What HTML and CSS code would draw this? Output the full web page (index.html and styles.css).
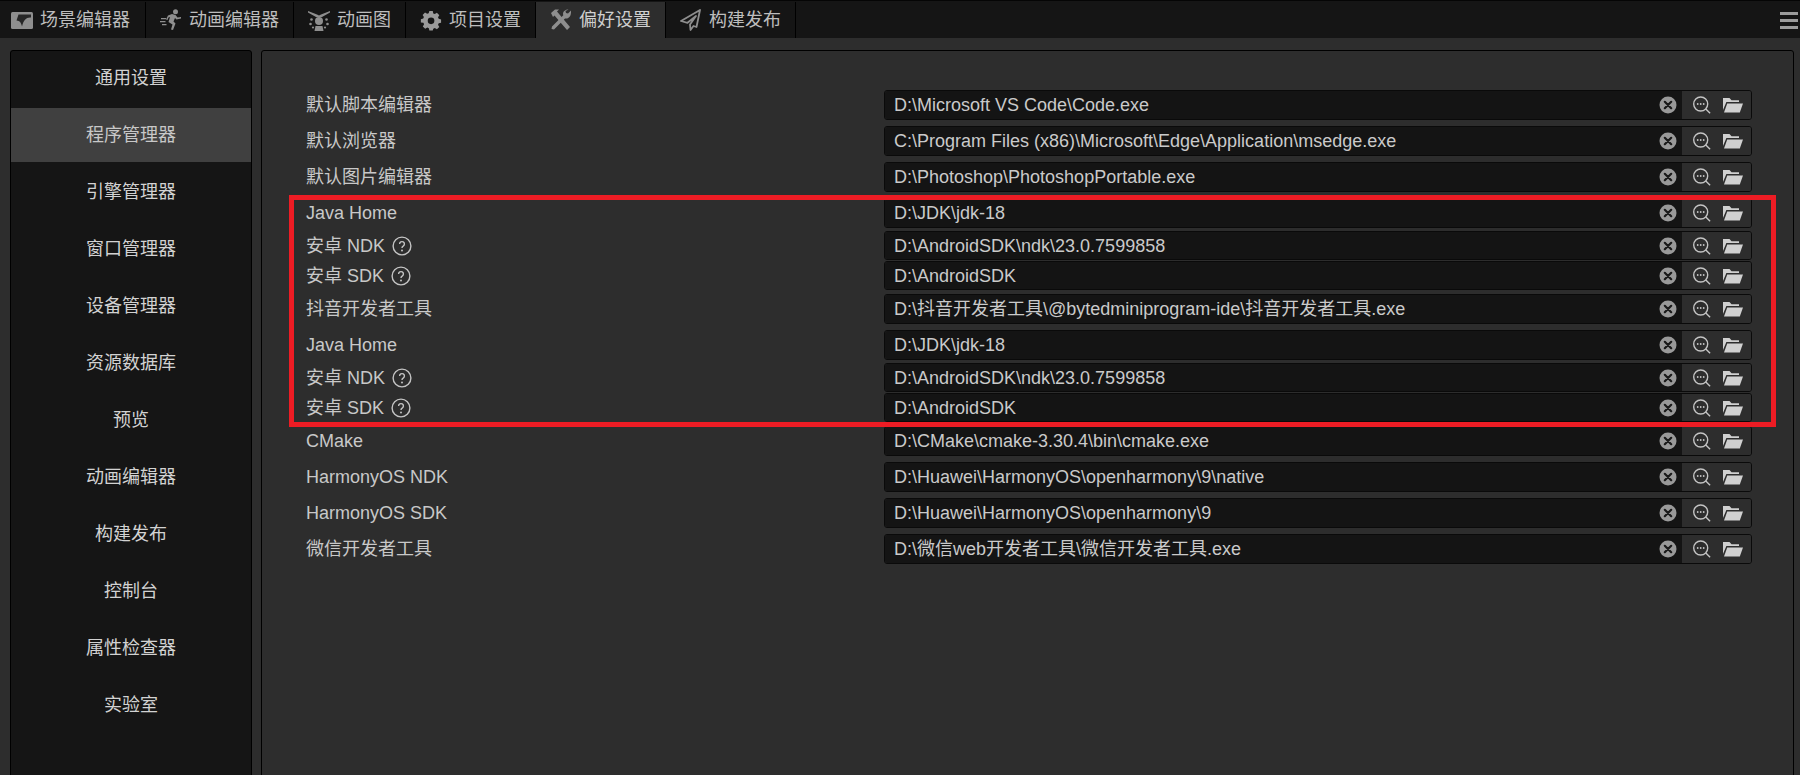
FILE: index.html
```html
<!DOCTYPE html>
<html lang="zh">
<head>
<meta charset="utf-8">
<title>偏好设置</title>
<link rel="stylesheet" href="styles.css">
</head>
<body>
<svg class="defs" width="0" height="0" aria-hidden="true">
  <symbol id="i-clear" viewBox="0 0 18 18">
    <circle cx="9" cy="9" r="8.5" fill="#999"/>
    <path d="M5.8 5.8l6.4 6.4M12.2 5.8l-6.4 6.4" stroke="#1a1a1a" stroke-width="2.2" stroke-linecap="round" fill="none"/>
  </symbol>
  <symbol id="i-search" viewBox="0 0 18 18">
    <circle cx="7.7" cy="8" r="7" fill="none" stroke="#c4c4c4" stroke-width="1.4"/>
    <path d="M12.8 13l4.300 4.300" stroke="#c4c4c4" stroke-width="1.4" fill="none"/>
    <circle cx="4.700" cy="8" r=".9" fill="#c4c4c4"/><circle cx="7.700" cy="8" r=".9" fill="#c4c4c4"/><circle cx="10.700" cy="8" r=".9" fill="#c4c4c4"/>
  </symbol>
  <symbol id="i-folder" viewBox="0 0 20 16">
    <path d="M0 15.500V1h6.500l2 2.200h7.500V5H3.400L0 13z" fill="#d0d0d0"/>
    <path d="M1 15.500L4.200 6.600H20l-3.200 8.900z" fill="#d0d0d0"/>
  </symbol>
  <symbol id="i-help" viewBox="0 0 20 20">
    <circle cx="10" cy="10" r="8.900" fill="none" stroke="#c4c4c4" stroke-width="1.400"/>
    <path d="M7.600 8a2.400 2.400 0 1 1 3.600 2.100c-.8.500-1.200.9-1.200 1.900" fill="none" stroke="#c4c4c4" stroke-width="1.400"/>
    <circle cx="10" cy="14.400" r="1" fill="#c4c4c4"/>
  </symbol>
</svg>

<header class="tabbar">
  <nav class="tabs">
    <div class="tab tab-first">
      <svg class="tab-icon" viewBox="0 0 22 17"><rect width="22" height="17" rx="1.500" fill="#8e8e8e"/><path d="M7.500 2.500H20V5.500C15.500 5 12.500 8 11 14.500 10.300 11 9 8.800 5.500 8.500z" fill="#262626"/></svg>
      <span>场景编辑器</span>
    </div>
    <div class="tab">
      <svg class="tab-icon" viewBox="0 0 22 22"><g fill="#8e8e8e"><circle cx="15.500" cy="2.800" r="2.500"/><path d="M8 6.500l4-1.500 3.500 1 2 2.500 3.500-.5v1.500l-4.500 1-1.500-1.500-1.500 3.500 2 2-2.500 6.500-2-.5 1.500-5-4-2.500 1.500-5-1.500.5-1 2.500-1.500-.5z"/><path d="M1 9h5v1.200H1zM0 12h5.500v1.200H0zM2 15h4.500v1.200H2z"/></g></svg>
      <span>动画编辑器</span>
    </div>
    <div class="tab">
      <svg class="tab-icon" viewBox="0 0 22 22"><g fill="#8e8e8e"><path d="M0 2l9 3.500 2 1 2-1L22 2v1.500L14 8l-3 .5L8 8 0 3.500z"/><circle cx="11" cy="12" r="4"/><path d="M7.500 17h7l1 5h-9z"/><circle cx="3.500" cy="10.500" r="1.300"/><circle cx="18.500" cy="10.500" r="1.300"/><circle cx="2.500" cy="15" r="1.300"/><circle cx="19.500" cy="15" r="1.300"/><circle cx="5" cy="18.500" r="1.100"/><circle cx="17" cy="18.500" r="1.100"/></g></svg>
      <span>动画图</span>
    </div>
    <div class="tab">
      <svg class="tab-icon" viewBox="0 0 22 22"><path fill="#9a9a9a" fill-rule="evenodd" d="M9 1h4l.6 2.800 1.800.8 2.500-1.500 2.800 2.800-1.500 2.500.8 1.800 2.800.6v4l-2.800.6-.8 1.800 1.500 2.500-2.800 2.800-2.500-1.500-1.800.8L13 24H9l-.6-2.800-1.800-.8-2.500 1.500-2.800-2.800 1.500-2.500-.8-1.800L-1 14.500v-4l2.800-.6.800-1.800-1.500-2.500 2.800-2.800 2.500 1.500 1.800-.8zM11 8.600a3.900 3.900 0 1 0 0 7.800 3.900 3.900 0 0 0 0-7.800z" transform="translate(1.700 1.200) scale(.85)"/></svg>
      <span>项目设置</span>
    </div>
    <div class="tab tab-active">
      <svg class="tab-icon" viewBox="0 0 22 22"><g fill="#8e8e8e"><path d="M1 4l4-3.500h4L7 2.500 20 18l-3 3L4.500 6.500 3 8z"/><path d="M21 1.500l-3 3-2-.5-.5-2 3-1.500C16 .3 13 2 13 5l.3 1.300L2 17.500 1.500 20l2.500.5 11-11C18 10 21.500 8 21 1.500z"/></g></svg>
      <span>偏好设置</span>
    </div>
    <div class="tab">
      <svg class="tab-icon" viewBox="0 0 22 22"><path fill="none" stroke="#8e8e8e" stroke-width="1.800" stroke-linejoin="round" d="M20 1L1 12l6.500 1.800L16 7l-6 8.500.5 5.500 3-4 3 1z"/></svg>
      <span>构建发布</span>
    </div>
  </nav>
  <button class="menu" aria-label="menu"><i></i><i></i><i></i></button>
</header>

<main class="workspace">
  <aside class="sidebar">
    <div class="side-item">通用设置</div>
    <div class="side-item side-active">程序管理器</div>
    <div class="side-item">引擎管理器</div>
    <div class="side-item">窗口管理器</div>
    <div class="side-item">设备管理器</div>
    <div class="side-item">资源数据库</div>
    <div class="side-item">预览</div>
    <div class="side-item">动画编辑器</div>
    <div class="side-item">构建发布</div>
    <div class="side-item">控制台</div>
    <div class="side-item">属性检查器</div>
    <div class="side-item">实验室</div>
  </aside>

  <section class="panel">
    <div class="row"><div class="label">默认脚本编辑器</div><div class="field"><div class="path">D:\Microsoft VS Code\Code.exe<svg class="clear"><use href="#i-clear"/></svg></div><div class="actions"><svg class="search"><use href="#i-search"/></svg><svg class="folder"><use href="#i-folder"/></svg></div></div></div>
    <div class="row"><div class="label">默认浏览器</div><div class="field"><div class="path">C:\Program Files (x86)\Microsoft\Edge\Application\msedge.exe<svg class="clear"><use href="#i-clear"/></svg></div><div class="actions"><svg class="search"><use href="#i-search"/></svg><svg class="folder"><use href="#i-folder"/></svg></div></div></div>
    <div class="row"><div class="label">默认图片编辑器</div><div class="field"><div class="path">D:\Photoshop\PhotoshopPortable.exe<svg class="clear"><use href="#i-clear"/></svg></div><div class="actions"><svg class="search"><use href="#i-search"/></svg><svg class="folder"><use href="#i-folder"/></svg></div></div></div>

    <div class="row row-lead"><div class="label">Java Home</div><div class="field"><div class="path">D:\JDK\jdk-18<svg class="clear"><use href="#i-clear"/></svg></div><div class="actions"><svg class="search"><use href="#i-search"/></svg><svg class="folder"><use href="#i-folder"/></svg></div></div></div>
    <div class="row row-tight"><div class="label">安卓 NDK<svg class="help"><use href="#i-help"/></svg></div><div class="field"><div class="path">D:\AndroidSDK\ndk\23.0.7599858<svg class="clear"><use href="#i-clear"/></svg></div><div class="actions"><svg class="search"><use href="#i-search"/></svg><svg class="folder"><use href="#i-folder"/></svg></div></div></div>
    <div class="row row-tight row-end"><div class="label">安卓 SDK<svg class="help"><use href="#i-help"/></svg></div><div class="field"><div class="path">D:\AndroidSDK<svg class="clear"><use href="#i-clear"/></svg></div><div class="actions"><svg class="search"><use href="#i-search"/></svg><svg class="folder"><use href="#i-folder"/></svg></div></div></div>
    <div class="row"><div class="label">抖音开发者工具</div><div class="field"><div class="path">D:\抖音开发者工具\@bytedminiprogram-ide\抖音开发者工具.exe<svg class="clear"><use href="#i-clear"/></svg></div><div class="actions"><svg class="search"><use href="#i-search"/></svg><svg class="folder"><use href="#i-folder"/></svg></div></div></div>
    <div class="row row-lead"><div class="label">Java Home</div><div class="field"><div class="path">D:\JDK\jdk-18<svg class="clear"><use href="#i-clear"/></svg></div><div class="actions"><svg class="search"><use href="#i-search"/></svg><svg class="folder"><use href="#i-folder"/></svg></div></div></div>
    <div class="row row-tight"><div class="label">安卓 NDK<svg class="help"><use href="#i-help"/></svg></div><div class="field"><div class="path">D:\AndroidSDK\ndk\23.0.7599858<svg class="clear"><use href="#i-clear"/></svg></div><div class="actions"><svg class="search"><use href="#i-search"/></svg><svg class="folder"><use href="#i-folder"/></svg></div></div></div>
    <div class="row row-tight row-end"><div class="label">安卓 SDK<svg class="help"><use href="#i-help"/></svg></div><div class="field"><div class="path">D:\AndroidSDK<svg class="clear"><use href="#i-clear"/></svg></div><div class="actions"><svg class="search"><use href="#i-search"/></svg><svg class="folder"><use href="#i-folder"/></svg></div></div></div>

    <div class="row"><div class="label">CMake</div><div class="field"><div class="path">D:\CMake\cmake-3.30.4\bin\cmake.exe<svg class="clear"><use href="#i-clear"/></svg></div><div class="actions"><svg class="search"><use href="#i-search"/></svg><svg class="folder"><use href="#i-folder"/></svg></div></div></div>
    <div class="row"><div class="label">HarmonyOS NDK</div><div class="field"><div class="path">D:\Huawei\HarmonyOS\openharmony\9\native<svg class="clear"><use href="#i-clear"/></svg></div><div class="actions"><svg class="search"><use href="#i-search"/></svg><svg class="folder"><use href="#i-folder"/></svg></div></div></div>
    <div class="row"><div class="label">HarmonyOS SDK</div><div class="field"><div class="path">D:\Huawei\HarmonyOS\openharmony\9<svg class="clear"><use href="#i-clear"/></svg></div><div class="actions"><svg class="search"><use href="#i-search"/></svg><svg class="folder"><use href="#i-folder"/></svg></div></div></div>
    <div class="row"><div class="label">微信开发者工具</div><div class="field"><div class="path">D:\微信web开发者工具\微信开发者工具.exe<svg class="clear"><use href="#i-clear"/></svg></div><div class="actions"><svg class="search"><use href="#i-search"/></svg><svg class="folder"><use href="#i-folder"/></svg></div></div></div>

    <div class="callout"></div>
  </section>
</main>
</body>
</html>
```

FILE: styles.css
```css
* { box-sizing: border-box; }
html, body { margin: 0; height: 100%; }
body {
  display: flex;
  flex-direction: column;
  height: 775px;
  overflow: hidden;
  background: #2d2d2d;
  color: #c8c8c8;
  font: 18px/1 "Liberation Sans", "Noto Sans CJK SC", sans-serif;
}
.defs { position: absolute; }

.tabbar {
  flex: none;
  display: flex;
  justify-content: space-between;
  height: 38px;
  padding-top: 2px;
  background: #151515;
  border-top: 1px solid #050505;
}
.tabs { display: flex; }
.tab {
  display: flex;
  align-items: center;
  gap: 7px;
  padding: 0 14px;
  border-right: 1px solid #000;
  color: #bdbdbd;
  margin-top: -1px;
}
.tab-first { padding: 0 15px 0 11px; }
.tab-active { background: #2d2d2d; color: #cfcfcf; }
.tab-icon { width: 22px; height: 22px; flex: none; }
.tab-first .tab-icon { height: 17px; }

.menu {
  display: flex;
  flex-direction: column;
  gap: 4px;
  width: 18px;
  margin: 9px 2px 0 0;
  padding: 0;
  border: 0;
  background: none;
}
.menu i { display: block; width: 18px; height: 3px; background: #9c9c9c; }

.workspace {
  flex: 1;
  display: flex;
  gap: 9px;
  min-height: 0;
  padding: 12px 6px 0 10px;
}
.sidebar {
  flex: none;
  width: 242px;
  height: 760px;
  display: flex;
  flex-direction: column;
  gap: 3px;
  background: #151515;
  border: 1px solid #000;
  border-radius: 3px;
}
.side-item {
  flex: none;
  display: flex;
  align-items: center;
  justify-content: center;
  height: 54px;
  color: #d2d2d2;
}
.side-active { background: #404040; color: #c8c8c8; }

.panel {
  position: relative;
  flex: 1;
  height: 760px;
  padding: 39px 41px 0 44px;
  background: #2d2d2d;
  border: 1px solid #000;
  border-radius: 3px;
}
.row {
  display: flex;
  align-items: center;
  justify-content: space-between;
  height: 30px;
  margin-bottom: 6px;
}
.row-lead { margin-bottom: 3px; }
.row-tight { height: 29px; margin-bottom: 1px; }
.row-end { margin-bottom: 4px; }
.label { display: flex; align-items: center; white-space: pre; }
.help { width: 20px; height: 20px; margin-left: 7px; }

.field {
  flex: none;
  display: flex;
  width: 868px;
  height: 100%;
  border: 1px solid #0a0a0a;
  border-radius: 3px;
  overflow: hidden;
}
.path {
  flex: 1;
  display: flex;
  align-items: center;
  justify-content: space-between;
  padding: 0 5px 0 9px;
  background: #141414;
  color: #cacaca;
  white-space: nowrap;
}
.clear { width: 18px; height: 18px; flex: none; }
.actions {
  flex: none;
  display: flex;
  align-items: center;
  width: 69px;
  padding-left: 11px;
  gap: 12px;
  background: #2d2d2d;
}
.search { width: 18px; height: 18px; flex: none; }
.folder { width: 20px; height: 16px; flex: none; }

.callout {
  position: absolute;
  left: 27px;
  top: 144px;
  width: 1487px;
  height: 232px;
  border: 5px solid #ed1c24;
  pointer-events: none;
}
```
